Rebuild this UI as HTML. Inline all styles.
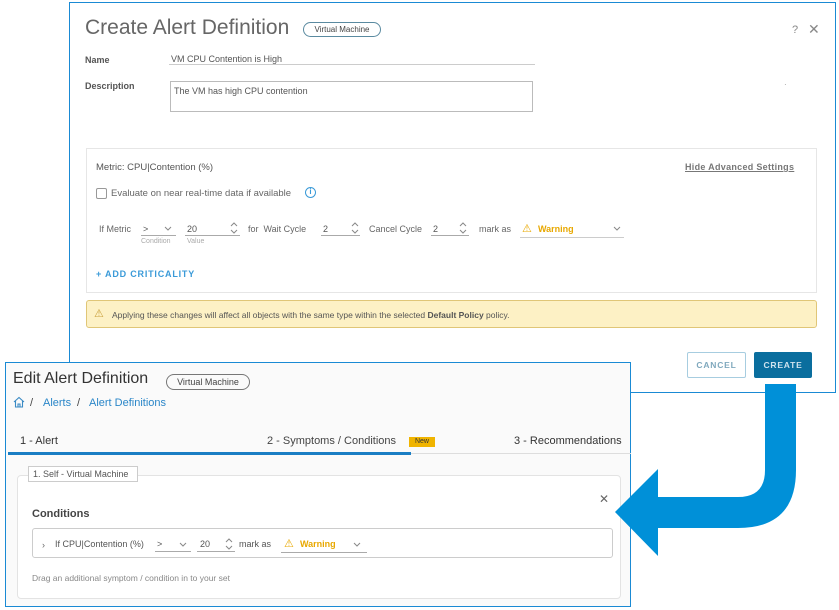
<!DOCTYPE html>
<html><head><meta charset="utf-8"><style>
*{margin:0;padding:0;box-sizing:border-box}
body{width:839px;height:610px;background:#fff;position:relative;overflow:hidden;font-family:"Liberation Sans",sans-serif;color:#565656}
.a{position:absolute;white-space:nowrap}
.pill{position:absolute;border:1px solid #777;border-radius:10px;font-size:9px;text-align:center;color:#444}
.ul{position:absolute;border-bottom:1px solid #aaa}
</style></head><body>
<!-- top dialog -->
<div class="a" style="left:69px;top:2px;width:767px;height:391px;border:1px solid #1a8ad4;background:#fff"></div>
<div class="a" style="left:85px;top:16px;font-size:21px;color:#666">Create Alert Definition</div>
<div class="pill" style="left:303px;top:22px;width:78px;height:15px;line-height:13px;font-size:8px;border-color:#5a8aa0">Virtual Machine</div>
<div class="a" style="left:792px;top:24px;font-size:11px;color:#888">?</div>
<div class="a" style="left:808px;top:21px;font-size:14px;color:#888">✕</div>
<div class="a" style="left:85px;top:55px;font-size:9px;font-weight:bold;color:#555">Name</div>
<div class="a" style="left:171px;top:54px;font-size:9px;color:#555">VM CPU Contention is High</div>
<div class="ul" style="left:169px;top:64px;width:366px;border-color:#ccc"></div>
<div class="a" style="left:85px;top:81px;font-size:9px;font-weight:bold;color:#555">Description</div>
<div class="a" style="left:170px;top:81px;width:363px;height:31px;border:1px solid #bbb;font-size:9px;padding:4px 3px;color:#555">The VM has high CPU contention</div>
<div class="a" style="left:784px;top:80px;font-size:8px;color:#999">·</div>
<div class="a" style="left:86px;top:148px;width:731px;height:145px;border:1px solid #e6e6e6"></div>
<div class="a" style="left:96px;top:162px;font-size:9.5px;color:#555">Metric: CPU|Contention (%)</div>
<div class="a" style="left:685px;top:162px;font-size:9px;font-weight:bold;color:#777;text-decoration:underline;letter-spacing:.3px">Hide Advanced Settings</div>
<div class="a" style="left:96px;top:188px;width:11px;height:11px;border:1px solid #999;border-radius:2px"></div>
<div class="a" style="left:111px;top:188px;font-size:9.5px;color:#666">Evaluate on near real-time data if available</div>
<div class="a" style="left:305px;top:187px;width:11px;height:11px;border:1.5px solid #3a9ad8;border-radius:50%;font-size:8px;line-height:8px;text-align:center;color:#3a9ad8;font-weight:bold">i</div>
<div class="a" style="left:99px;top:224px;font-size:9px;color:#666">If Metric</div>
<div class="a" style="left:143px;top:224px;font-size:9px;color:#555">&gt;</div>
<svg class="a" style="left:164px;top:226px" width="8" height="6"><path d="M1,1 L4,4 L7,1" fill="none" stroke="#888"/></svg>
<div class="ul" style="left:141px;top:235px;width:35px"></div>
<div class="a" style="left:141px;top:238px;font-size:7px;color:#aaa">Condition</div>
<div class="a" style="left:187px;top:224px;font-size:9px;color:#555">20</div>
<svg class="a" style="left:230px;top:222px" width="8" height="12"><path d="M1,4 L4,1 L7,4 M1,8 L4,11 L7,8" fill="none" stroke="#888"/></svg>
<div class="ul" style="left:185px;top:235px;width:55px"></div>
<div class="a" style="left:187px;top:238px;font-size:7px;color:#aaa">Value</div>
<div class="a" style="left:248px;top:224px;font-size:9px;color:#666">for &nbsp;Wait Cycle</div>
<div class="a" style="left:323px;top:224px;font-size:9px;color:#555">2</div>
<svg class="a" style="left:351px;top:222px" width="8" height="12"><path d="M1,4 L4,1 L7,4 M1,8 L4,11 L7,8" fill="none" stroke="#888"/></svg>
<div class="ul" style="left:321px;top:235px;width:39px"></div>
<div class="a" style="left:369px;top:224px;font-size:9px;color:#666">Cancel Cycle</div>
<div class="a" style="left:433px;top:224px;font-size:9px;color:#555">2</div>
<svg class="a" style="left:459px;top:222px" width="8" height="12"><path d="M1,4 L4,1 L7,4 M1,8 L4,11 L7,8" fill="none" stroke="#888"/></svg>
<div class="ul" style="left:431px;top:235px;width:38px"></div>
<div class="a" style="left:479px;top:224px;font-size:9px;color:#666">mark as</div>
<div class="a" style="left:522px;top:222px;font-size:11px;color:#e8a800">⚠</div>
<div class="a" style="left:538px;top:224px;font-size:9px;color:#e8a800;font-weight:bold">Warning</div>
<svg class="a" style="left:613px;top:226px" width="8" height="6"><path d="M1,1 L4,4 L7,1" fill="none" stroke="#888"/></svg>
<div class="ul" style="left:520px;top:237px;width:104px;border-color:#ccc"></div>
<div class="a" style="left:96px;top:269px;font-size:9px;font-weight:bold;color:#3a9ad8;letter-spacing:.8px">+ ADD CRITICALITY</div>
<div class="a" style="left:86px;top:300px;width:731px;height:28px;background:#fdf1c5;border:1px solid #e0c677;border-radius:3px"></div>
<div class="a" style="left:94px;top:307px;font-size:11px;color:#c9a03c">⚠</div>
<div class="a" style="left:112px;top:310px;font-size:8.5px;color:#555">Applying these changes will affect all objects with the same type within the selected <b>Default Policy</b> policy.</div>
<div class="a" style="left:687px;top:352px;width:59px;height:26px;border:1px solid #a7cde0;border-radius:2px;font-size:8.5px;font-weight:bold;color:#7fa8bd;text-align:center;line-height:24px;letter-spacing:.8px">CANCEL</div>
<div class="a" style="left:754px;top:352px;width:58px;height:26px;background:#0a6e9e;border-radius:2px;font-size:8.5px;font-weight:bold;color:#cfe3ee;text-align:center;line-height:26px;letter-spacing:.8px">CREATE</div>
<!-- bottom panel -->
<div class="a" style="left:5px;top:362px;width:626px;height:245px;border:1px solid #1a8ad4;background:#fafafa"></div>
<div class="a" style="left:13px;top:370px;font-size:16px;color:#333">Edit Alert Definition</div>
<div class="pill" style="left:166px;top:374px;width:84px;height:16px;line-height:14px;font-size:9px">Virtual Machine</div>
<svg class="a" style="left:13px;top:396px" width="12" height="12"><path d="M1,6 L6,1.5 L11,6 M2.5,5 V11 H9.5 V5 M5,11 V8 H7 V11" fill="none" stroke="#3a8ac4" stroke-width="1.1"/></svg>
<div class="a" style="left:30px;top:397px;font-size:11px;color:#444">/</div>
<div class="a" style="left:43px;top:397px;font-size:11px;color:#2a86c8">Alerts</div>
<div class="a" style="left:77px;top:397px;font-size:11px;color:#444">/</div>
<div class="a" style="left:89px;top:397px;font-size:11px;color:#2a86c8">Alert Definitions</div>
<div class="a" style="left:20px;top:435px;font-size:11px;color:#333">1 - Alert</div>
<div class="a" style="left:267px;top:435px;font-size:11px;color:#444">2 - Symptoms / Conditions</div>
<div class="a" style="left:409px;top:437px;width:26px;height:10px;background:#f0b400;font-size:7px;line-height:10px;text-align:center;color:#333">New</div>
<div class="a" style="left:514px;top:435px;font-size:11px;color:#333">3 - Recommendations</div>
<div class="a" style="left:8px;top:453px;width:623px;border-bottom:1px solid #ddd"></div>
<div class="a" style="left:8px;top:452px;width:403px;height:3px;background:#1a7ec4"></div>
<div class="a" style="left:17px;top:475px;width:604px;height:124px;border:1px solid #e3e3e3;border-radius:4px;background:#fff"></div>
<div class="a" style="left:28px;top:466px;width:110px;height:16px;border:1px solid #ccc;background:#fff;font-size:9px;color:#555;padding:2px 4px">1. Self - Virtual Machine</div>
<div class="a" style="left:599px;top:492px;font-size:12px;color:#666">✕</div>
<div class="a" style="left:32px;top:508px;font-size:11px;font-weight:bold;color:#444">Conditions</div>
<div class="a" style="left:32px;top:528px;width:581px;height:30px;border:1px solid #ccc;border-radius:3px;background:#fff"></div>
<div class="a" style="left:42px;top:540px;font-size:9px;color:#666">›</div>
<div class="a" style="left:55px;top:539px;font-size:9px;color:#555">If CPU|Contention (%)</div>
<div class="a" style="left:157px;top:539px;font-size:9px;color:#555">&gt;</div>
<svg class="a" style="left:179px;top:542px" width="8" height="6"><path d="M1,1 L4,4 L7,1" fill="none" stroke="#888"/></svg>
<div class="ul" style="left:155px;top:551px;width:36px"></div>
<div class="a" style="left:200px;top:539px;font-size:9px;color:#555">20</div>
<svg class="a" style="left:225px;top:538px" width="8" height="12"><path d="M1,4 L4,1 L7,4 M1,8 L4,11 L7,8" fill="none" stroke="#888"/></svg>
<div class="ul" style="left:197px;top:551px;width:38px"></div>
<div class="a" style="left:239px;top:539px;font-size:9px;color:#555">mark as</div>
<div class="a" style="left:284px;top:537px;font-size:11px;color:#e8a800">⚠</div>
<div class="a" style="left:300px;top:539px;font-size:9px;color:#e8a800;font-weight:bold">Warning</div>
<svg class="a" style="left:353px;top:542px" width="8" height="6"><path d="M1,1 L4,4 L7,1" fill="none" stroke="#888"/></svg>
<div class="ul" style="left:281px;top:552px;width:86px"></div>
<div class="a" style="left:32px;top:573px;font-size:8.5px;color:#888">Drag an additional symptom / condition in to your set</div>
<!-- arrow (on top) -->
<svg class="a" style="left:0;top:0" width="839" height="610"><path d="M765,384 L796,384 L796,470 Q796,528 738,528 L658,528 L658,556 L615,512 L658,469 L658,497 L738,497 Q765,497 765,470 Z" fill="#0090d8"/></svg>
</body></html>
